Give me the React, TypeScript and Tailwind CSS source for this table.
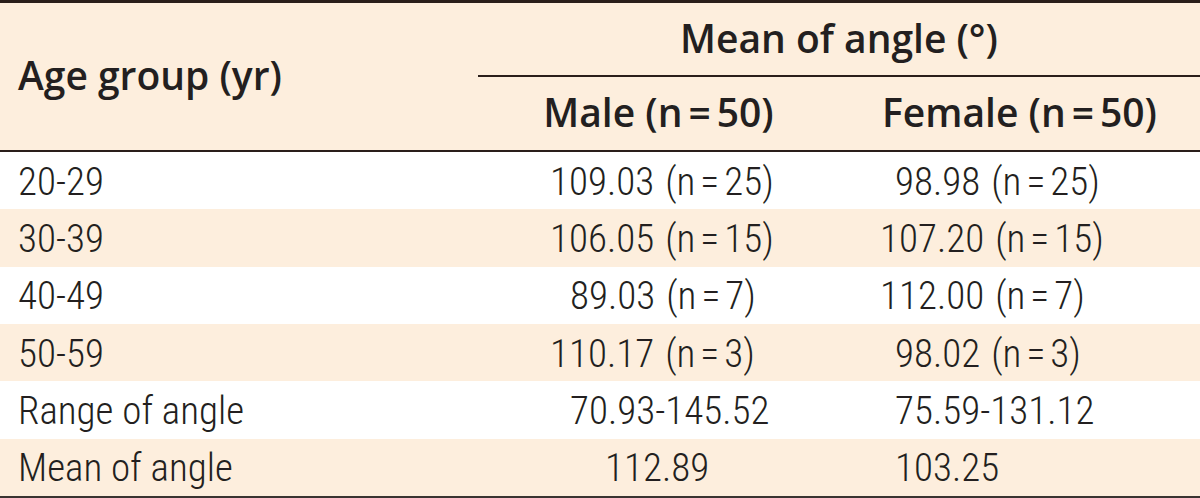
import React from "react";

type Val = { v: string; n?: string };
const rows: { label: string; male: Val; malePad: string; female: Val; femalePad: string; bg: string }[] = [
  { label: "20-29", male: { v: "109.03", n: "25" }, malePad: "pl-[72px]", female: { v: "98.98", n: "25" }, femalePad: "pl-[56px]", bg: "bg-white" },
  { label: "30-39", male: { v: "106.05", n: "15" }, malePad: "pl-[72px]", female: { v: "107.20", n: "15" }, femalePad: "pl-[41px]", bg: "bg-[#fdeedd]" },
  { label: "40-49", male: { v: "89.03", n: "7" }, malePad: "pl-[92px]", female: { v: "112.00", n: "7" }, femalePad: "pl-[41px]", bg: "bg-white" },
  { label: "50-59", male: { v: "110.17", n: "3" }, malePad: "pl-[72px]", female: { v: "98.02", n: "3" }, femalePad: "pl-[56px]", bg: "bg-[#fdeedd]" },
  { label: "Range of angle", male: { v: "70.93-145.52" }, malePad: "pl-[92px]", female: { v: "75.59-131.12" }, femalePad: "pl-[56px]", bg: "bg-white" },
  { label: "Mean of angle", male: { v: "112.89" }, malePad: "pl-[127px]", female: { v: "103.25" }, femalePad: "pl-[56px]", bg: "bg-[#fdeedd]" },
];

function Cell({ val, pad }: { val: Val; pad: string }) {
  return (
    <div className={`${pad} whitespace-nowrap`}>
      <span>{val.v}</span>
      {val.n && (
        <span className="ml-[11px]">
          (n<span className="mx-[5px]">=</span>{val.n})
        </span>
      )}
    </div>
  );
}

export default function App() {
  return (
    <div className="w-[1200px] h-[498px] bg-white text-[#231f20] overflow-hidden">
      <div className="border-t-[3px] border-[#2a1e1a]">
        <div className="bg-[#fdeedd] border-b-[2px] border-[#2a1e1a] grid grid-cols-[478px_1fr] h-[149px] font-['Open_Sans',sans-serif] font-semibold text-[39px] leading-none">
          <div className="flex items-center pl-[18px] pb-[4px]">Age group (yr)</div>
          <div className="flex flex-col">
            <div className="h-[74px] flex items-center justify-center border-b-[2px] border-[#2a1e1a] pb-[4px]">Mean of angle (°)</div>
            <div className="flex-1 grid grid-cols-[361px_1fr]">
              <div className="flex items-center justify-center pb-[4px]">
                Male (n<span className="mx-[6px]">=</span>50)
              </div>
              <div className="flex items-center justify-center pb-[4px]">
                Female (n<span className="mx-[6px]">=</span>50)
              </div>
            </div>
          </div>
        </div>
        <div className="font-['Roboto_Condensed','Roboto',sans-serif] font-light text-[39px] leading-none">
          {rows.map((r) => (
            <div key={r.label} className={`grid grid-cols-[478px_361px_1fr] h-[57.33px] items-center pt-[3px] ${r.bg}`}>
              <div className="pl-[18px]">{r.label}</div>
              <Cell val={r.male} pad={r.malePad} />
              <Cell val={r.female} pad={r.femalePad} />
            </div>
          ))}
        </div>
        <div className="border-t-[2px] border-[#3a3330]" />
      </div>
    </div>
  );
}
